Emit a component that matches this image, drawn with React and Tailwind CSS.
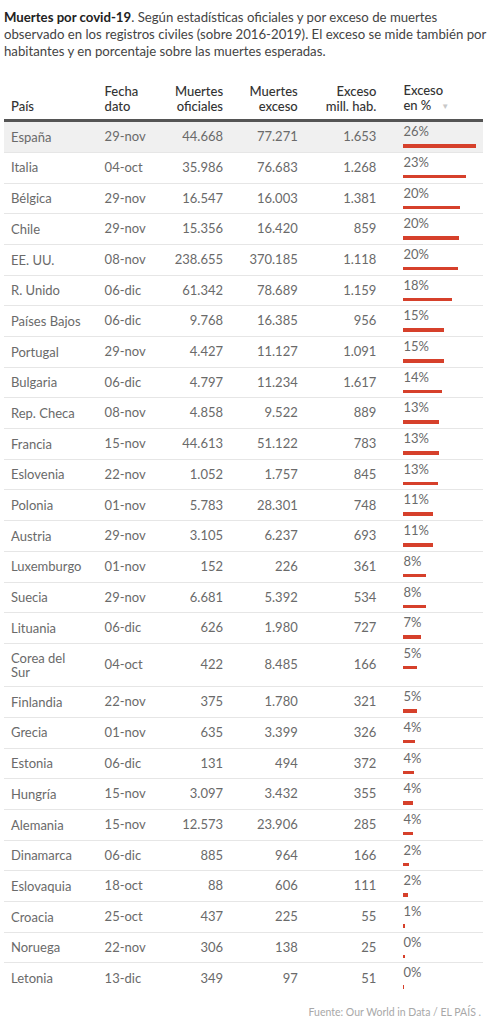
import React from 'react';

const rows = [
  ['España', '29-nov', '44.668', '77.271', '1.653', '26%', 73],
  ['Italia', '04-oct', '35.986', '76.683', '1.268', '23%', 63],
  ['Bélgica', '29-nov', '16.547', '16.003', '1.381', '20%', 57],
  ['Chile', '29-nov', '15.356', '16.420', '859', '20%', 56],
  ['EE. UU.', '08-nov', '238.655', '370.185', '1.118', '20%', 55],
  ['R. Unido', '06-dic', '61.342', '78.689', '1.159', '18%', 49],
  ['Países Bajos', '06-dic', '9.768', '16.385', '956', '15%', 41],
  ['Portugal', '29-nov', '4.427', '11.127', '1.091', '15%', 41],
  ['Bulgaria', '06-dic', '4.797', '11.234', '1.617', '14%', 39],
  ['Rep. Checa', '08-nov', '4.858', '9.522', '889', '13%', 36],
  ['Francia', '15-nov', '44.613', '51.122', '783', '13%', 36],
  ['Eslovenia', '22-nov', '1.052', '1.757', '845', '13%', 35],
  ['Polonia', '01-nov', '5.783', '28.301', '748', '11%', 30],
  ['Austria', '29-nov', '3.105', '6.237', '693', '11%', 30],
  ['Luxemburgo', '01-nov', '152', '226', '361', '8%', 23],
  ['Suecia', '29-nov', '6.681', '5.392', '534', '8%', 23],
  ['Lituania', '06-dic', '626', '1.980', '727', '7%', 18],
  ['Corea del Sur', '04-oct', '422', '8.485', '166', '5%', 14],
  ['Finlandia', '22-nov', '375', '1.780', '321', '5%', 14],
  ['Grecia', '01-nov', '635', '3.399', '326', '4%', 12],
  ['Estonia', '06-dic', '131', '494', '372', '4%', 11],
  ['Hungría', '15-nov', '3.097', '3.432', '355', '4%', 10],
  ['Alemania', '15-nov', '12.573', '23.906', '285', '4%', 10],
  ['Dinamarca', '06-dic', '885', '964', '166', '2%', 6],
  ['Eslovaquia', '18-oct', '88', '606', '111', '2%', 5],
  ['Croacia', '25-oct', '437', '225', '55', '1%', 2],
  ['Noruega', '22-nov', '306', '138', '25', '0%', 2],
  ['Letonia', '13-dic', '349', '97', '51', '0%', 1],
];

function Row({ r, i, last }) {
  const [pais, fecha, ofi, exc, mill, pct, bar] = r;
  const tall = pais === 'Corea del Sur';
  return (
    <div
      className={`flex items-center ${tall ? 'h-[43.3px]' : 'h-[30.7px]'} ${
        i === 0 ? 'bg-[#f0f0f0]' : ''
      } ${last ? '' : 'border-b border-[#e6e6e6]'}`}
    >
      <div className="w-[94px] pl-[7px] leading-[14.5px]">
        {tall ? (
          <>
            Corea del
            <br />
            Sur
          </>
        ) : (
          pais
        )}
      </div>
      <div className="w-[60px] pl-[7px]">{fecha}</div>
      <div className="w-[73px] pr-[7px] text-right">{ofi}</div>
      <div className="w-[75px] pr-[7px] text-right">{exc}</div>
      <div className="w-[79px] pr-[7px] text-right">{mill}</div>
      <div className="w-[100px] pl-[20px] self-start pt-[2px]">
        <div className="leading-[15px]">{pct}</div>
        <div className="mt-[5px] h-[3.5px] bg-[#d6402b]" style={{ width: bar }} />
      </div>
    </div>
  );
}

export default function App() {
  return (
    <div className="w-[487px] px-[4px] pt-[9px] pb-[4px] bg-white font-['Lato','Liberation_Sans',sans-serif] text-[13px] text-[#6a6a6a]">
      <div className="text-[13.2px] leading-[17px] text-[#444] whitespace-nowrap">
        <div>
          <span className="font-bold text-[#222]">Muertes por covid-19</span>. Según estadísticas oficiales y por exceso de muertes
        </div>
        <div>observado en los registros civiles (sobre 2016-2019). El exceso se mide también por</div>
        <div>habitantes y en porcentaje sobre las muertes esperadas.</div>
      </div>

      <div className="mt-[23px] flex items-end pb-[5px] border-b-[3px] border-[#555] text-[#333] leading-[15px] font-medium">
        <div className="w-[94px] pl-[7px]">País</div>
        <div className="w-[60px] pl-[7px]">
          Fecha
          <br />
          dato
        </div>
        <div className="w-[73px] pr-[7px] text-right">
          Muertes
          <br />
          oficiales
        </div>
        <div className="w-[75px] pr-[7px] text-right">
          Muertes
          <br />
          exceso
        </div>
        <div className="w-[79px] pr-[7px] text-right">
          Exceso
          <br />
          mill. hab.
        </div>
        <div className="w-[100px] pl-[20px]">
          Exceso
          <br />
          en %<span className="ml-[10px] text-[8px] text-[#c8c8c8] align-middle">▼</span>
        </div>
      </div>

      <div>
        {rows.map((r, i) => (
          <Row key={r[0]} r={r} i={i} last={i === rows.length - 1} />
        ))}
      </div>

      <div className="mt-[11px] text-right text-[10.5px] text-[#a8a8a8] pr-[2px]">
        Fuente: Our World in Data / EL PAÍS .
      </div>
    </div>
  );
}
